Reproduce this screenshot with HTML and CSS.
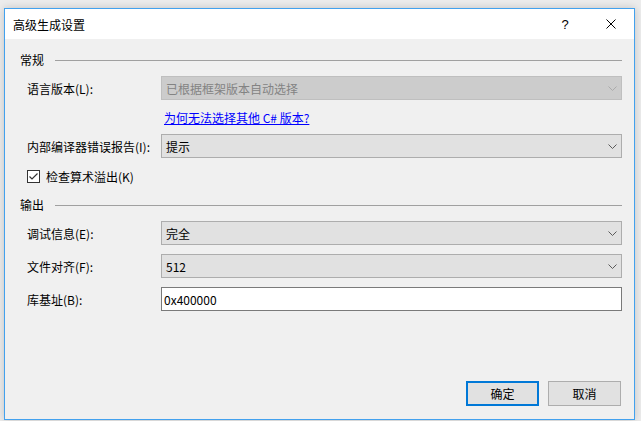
FILE: index.html
```html
<!DOCTYPE html>
<html lang="zh-CN">
<head>
  <meta charset="UTF-8" />
  <title>高级生成设置</title>
  <link rel="stylesheet" href="styles.css">
</head>
<body>

  <div class="dialog">
    <div class="titlebar">
      <span class="title">高级生成设置</span>
      <span class="tbtn help">?</span>
      <span class="tbtn close">
        <svg width="10" height="10" viewBox="0 0 10 10"><path d="M0.5 0.5 L9.5 9.5 M9.5 0.5 L0.5 9.5" stroke="#000" stroke-width="1" fill="none"/></svg>
      </span>
    </div>

    <div class="content">
      <div class="group first">
        <span>常规</span><div class="rule"></div>
      </div>

      <div class="row r1">
        <label>语言版本(L):</label>
        <div class="combo disabled">已根据框架版本自动选择
          <svg class="chev" width="9" height="5" viewBox="0 0 9 5"><path d="M0.5 0.5 L4.5 4.5 L8.5 0.5" fill="none"/></svg>
        </div>
      </div>

      <div class="row link-row">
        <label></label>
        <a href="#" class="link">为何无法选择其他 C# 版本?</a>
      </div>

      <div class="row r1">
        <label>内部编译器错误报告(I):</label>
        <div class="combo">提示
          <svg class="chev" width="9" height="5" viewBox="0 0 9 5"><path d="M0.5 0.5 L4.5 4.5 L8.5 0.5" fill="none"/></svg>
        </div>
      </div>

      <div class="check-row">
        <span class="checkbox">
          <svg width="11" height="11" viewBox="0 0 11 11"><path d="M1.5 5.5 L4 8 L9.5 2.5" stroke="#333" stroke-width="1.2" fill="none"/></svg>
        </span>
        检查算术溢出(K)
      </div>

      <div class="group second">
        <span>输出</span><div class="rule"></div>
      </div>

      <div class="row r1">
        <label>调试信息(E):</label>
        <div class="combo">完全
          <svg class="chev" width="9" height="5" viewBox="0 0 9 5"><path d="M0.5 0.5 L4.5 4.5 L8.5 0.5" fill="none"/></svg>
        </div>
      </div>

      <div class="row r2">
        <label>文件对齐(F):</label>
        <div class="combo">512
          <svg class="chev" width="9" height="5" viewBox="0 0 9 5"><path d="M0.5 0.5 L4.5 4.5 L8.5 0.5" fill="none"/></svg>
        </div>
      </div>

      <div class="row r2">
        <label>库基址(B):</label>
        <div class="textbox">0x400000</div>
      </div>

      <div class="footer">
        <button class="btn default">确定</button>
        <button class="btn">取消</button>
      </div>
    </div>
  </div>

</body>
</html>
```

FILE: styles.css
```css
body {
  margin: 0;
  background: #ececec;
  font-family: "Noto Sans CJK SC", "Noto Sans", sans-serif;
  font-size: 12px;
  color: #000;
  height: 421px;
  overflow: hidden;
}

.dialog {
  margin: 8px 0 0 4px;
  width: 631px;
  height: 412px;
  box-sizing: border-box;
  border: 1px solid #42a1ee;
  background: #f0f0f0;
  display: flex;
  flex-direction: column;
  box-shadow: 0 0 8px rgba(0, 0, 0, 0.18);
}

.titlebar {
  height: 30px;
  background: #fff;
  display: flex;
  align-items: center;
}

.title {
  padding-left: 8px;
  flex: 1;
  font-size: 12px;
}

.tbtn {
  width: 46px;
  height: 30px;
  display: flex;
  align-items: center;
  justify-content: center;
}

.help {
  font-family: "Liberation Sans", sans-serif;
  font-size: 13px;
}

.content {
  flex: 1;
  display: flex;
  flex-direction: column;
  padding: 0 12px 0 15px;
}

.group {
  height: 16px;
  display: flex;
  align-items: center;
  margin-top: 13px;
}

.group span {
  line-height: 16px;
}

.rule {
  flex: 1;
  height: 1px;
  background: #a0a0a0;
  margin-left: 11px;
}

.row {
  display: flex;
  align-items: center;
  padding-left: 7px;
}

.row label {
  width: 134px;
  flex-shrink: 0;
}

.r1 {
  margin-top: 8px;
}

.r2 {
  margin-top: 9px;
}

.combo {
  flex: 1;
  height: 24px;
  box-sizing: border-box;
  border: 1px solid #adadad;
  background: #e1e1e1;
  padding-left: 4px;
  display: flex;
  align-items: center;
  position: relative;
}

.combo.disabled {
  background: #cccccc;
  border-color: #bfbfbf;
  color: #838383;
}

.chev {
  position: absolute;
  right: 4px;
  top: 9px;
  stroke: #5a5a5a;
  stroke-width: 1;
}

.disabled .chev {
  stroke: #ababab;
}

.link-row {
  margin-top: 8px;
  height: 18px;
}

.link {
  color: #0000ff;
  text-decoration: underline;
  padding-left: 3px;
}

.check-row {
  margin-top: 10px;
  height: 16px;
  padding-left: 7px;
  display: flex;
  align-items: center;
}

.checkbox {
  width: 13px;
  height: 13px;
  box-sizing: border-box;
  border: 1px solid #333;
  background: #fff;
  margin-right: 6px;
  display: flex;
  align-items: center;
  justify-content: center;
}

.textbox {
  flex: 1;
  height: 24px;
  box-sizing: border-box;
  border: 1px solid #7a7a7a;
  background: #fff;
  padding-left: 2px;
  display: flex;
  align-items: center;
}

.footer {
  margin-top: auto;
  padding: 0 1px 13px 0;
  display: flex;
  justify-content: flex-end;
  gap: 9px;
}

.btn {
  width: 73px;
  height: 25px;
  box-sizing: border-box;
  border: 1px solid #adadad;
  background: #e1e1e1;
  font-family: "Noto Sans CJK SC", sans-serif;
  font-size: 12px;
  color: #000;
  padding: 0;
}

.btn.default {
  border: 2px solid #0078d7;
}
```
